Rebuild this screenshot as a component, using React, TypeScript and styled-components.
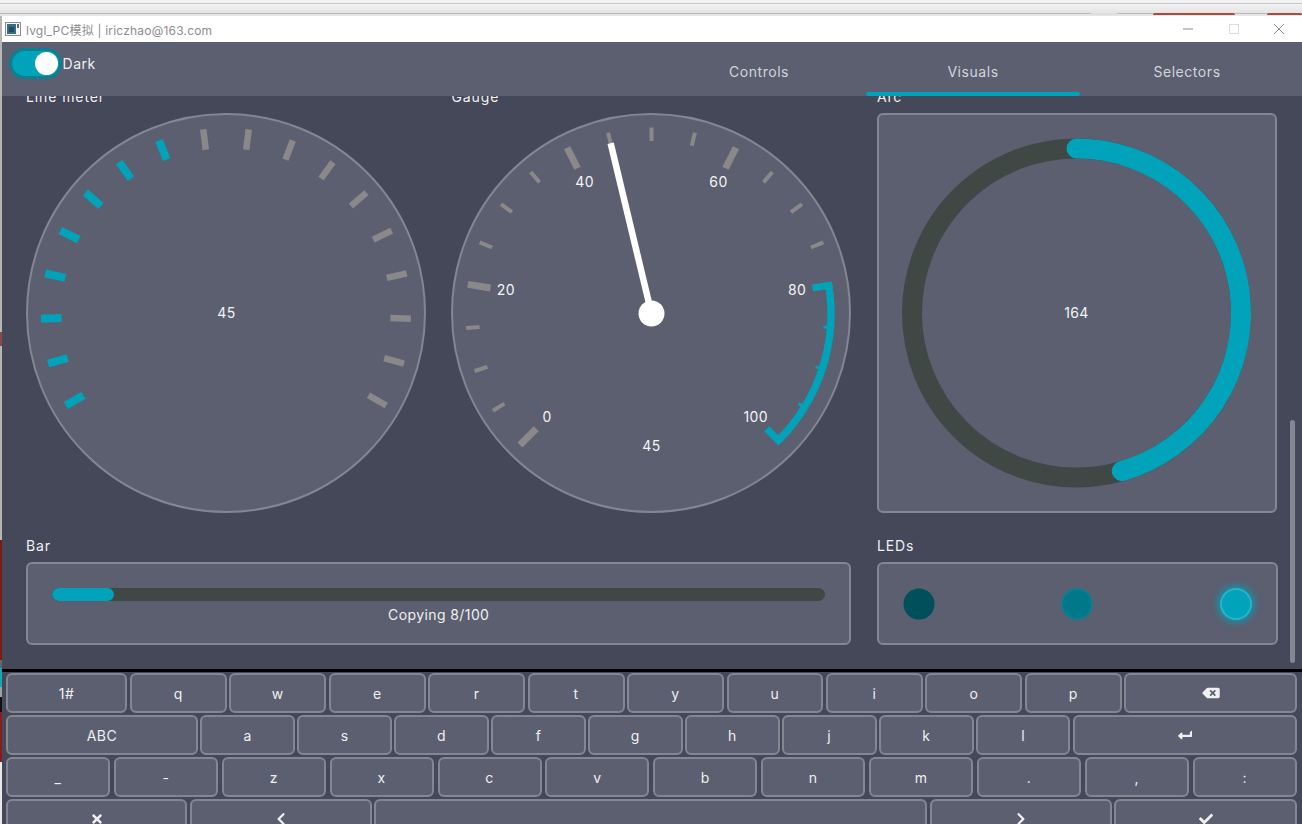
import React from 'react';
import styled, { createGlobalStyle } from 'styled-components';
import { FaBackspace, FaCheck, FaChevronLeft, FaChevronRight, FaLevelDownAlt, FaTimes } from 'react-icons/fa';

const TEAL = '#00a3b9';
const CARD = '#5b5f70';
const PAGE = '#444859';
const EDGE = '#838793';
const TRACK = '#404845';
const TICK = '#8b8889';

const GlobalStyle = createGlobalStyle`
	html, body {
		margin: 0;
		padding: 0;
		background: #ececec;
	}
	body {
		font-family: Inter, "Noto Sans CJK SC", sans-serif;
		letter-spacing: 0.55px;
	}
`;

const polar = (c: number, r: number, deg: number) => {
	const a = (deg * Math.PI) / 180;
	return { x: c + r * Math.cos(a), y: c + r * Math.sin(a) };
};

const arcPath = (c: number, r: number, from: number, to: number) => {
	const a = polar(c, r, from);
	const b = polar(c, r, to);
	const large = to - from > 180 ? 1 : 0;
	return `M ${a.x} ${a.y} A ${r} ${r} 0 ${large} 1 ${b.x} ${b.y}`;
};

function Tick({ c, r0, r1, deg, width, color }: { c: number; r0: number; r1: number; deg: number; width: number; color: string }) {
	const a = polar(c, r0, deg);
	const b = polar(c, r1, deg);
	return <line x1={a.x} y1={a.y} x2={b.x} y2={b.y} stroke={color} strokeWidth={width} />;
}

function LineMeter() {
	const ticks = Array.from({ length: 18 }, (_, i) => i);
	return (
		<DialSvg viewBox='2 2 396 396'>
			{ticks.map((i) => (
				<Tick
					key={i}
					c={200}
					r0={164.5}
					r1={185}
					deg={150 + (i * 240) / 17}
					width={i < 8 ? 8 : 6.5}
					color={i < 8 ? TEAL : TICK}
				/>
			))}
			<DialText x={200.5} y={199.5}>45</DialText>
		</DialSvg>
	);
}

function Gauge() {
	const ticks = Array.from({ length: 21 }, (_, i) => i);
	const labels = [0, 20, 40, 60, 80, 100];
	const needle = polar(200.5, 175, 135 + 45 * 2.7);
	return (
		<DialSvg viewBox='2 2 396 396'>
			{ticks.map((i) => {
				const major = i % 4 === 0;
				const hot = i >= 16;
				const outer = hot ? (major ? 183 : 179) : 186;
				return (
					<Tick
						key={i}
						c={200.5}
						r0={major ? 163 : 172.5}
						r1={outer}
						deg={135 + i * 13.5}
						width={major ? 7 : hot ? 3 : 4}
						color={hot ? TEAL : TICK}
					/>
				);
			})}
			<path d={arcPath(200.5, 179.5, 351, 405)} fill='none' stroke={TEAL} strokeWidth={7.4} />
			{labels.map((value, i) => {
				const p = polar(200.5, 147.5, 135 + i * 54);
				return <DialText key={value} x={p.x} y={p.y - 1}>{value}</DialText>;
			})}
			<line x1={200.5} y1={200.5} x2={needle.x} y2={needle.y} stroke='#fff' strokeWidth={6.5} />
			<circle cx={200.5} cy={200.5} r={13} fill='#fff' />
			<DialText x={200.5} y={332}>45</DialText>
		</DialSvg>
	);
}

function ArcDial() {
	const cx = 199.5;
	const cy = 200;
	const r = 164.5;
	const end = (74 * Math.PI) / 180;
	return (
		<DialSvg viewBox='2 2 396 396'>
			<circle cx={cx} cy={cy} r={r} fill='none' stroke={TRACK} strokeWidth={20} />
			<path
				d={`M ${cx} ${cy - r} A ${r} ${r} 0 0 1 ${cx + r * Math.cos(end)} ${cy + r * Math.sin(end)}`}
				fill='none'
				stroke={TEAL}
				strokeWidth={20}
				strokeLinecap='round'
			/>
			<DialText x={cx} y={cy - 0.5}>164</DialText>
		</DialSvg>
	);
}

function EnterIcon() {
	return <FaLevelDownAlt style={{ transform: 'rotate(90deg)' }} />;
}

function BackspaceIcon() {
	return <FaBackspace style={{ width: 18 }} />;
}

type KeyDef = { label: React.ReactNode; w: number };
const k = (label: React.ReactNode, w: number): KeyDef => ({ label, w });

const keyRows: { gap: number; keys: KeyDef[] }[] = [
	{
		gap: 2.55,
		keys: [
			k('1#', 121.4),
			...['q', 'w', 'e', 'r', 't', 'y', 'u', 'i', 'o', 'p'].map((c) => k(c, 96.9)),
			k(<BackspaceIcon />, 172.6),
		],
	},
	{
		gap: 2.45,
		keys: [
			k('ABC', 192),
			...['a', 's', 'd', 'f', 'g', 'h', 'j', 'k', 'l'].map((c) => k(c, 94.5)),
			k(<EnterIcon />, 224),
		],
	},
	{
		gap: 3.9,
		keys: ['_', '-', 'z', 'x', 'c', 'v', 'b', 'n', 'm', '.', ',', ':'].map((c) => k(c, 104)),
	},
	{
		gap: 2.75,
		keys: [
			k(<FaTimes />, 181.4),
			k(<FaChevronLeft />, 181.6),
			k('', 552.4),
			k(<FaChevronRight />, 182),
			k(<FaCheck />, 182.6),
		],
	},
];

export default function App() {
	return (
		<>
			<GlobalStyle />
			<Screen>
				<BrowserBar>
					<BrowserTab $w={28} $mr={35} />
					<BrowserTab $w={82} $mr={32} $accent />
					<BrowserTab $w={35} $mr={0} $fill />
				</BrowserBar>
				<Desktop>
					<SideStrip />
					<Window>
						<TitleBar>
							<WindowIcon viewBox='0 0 16 14'>
								<rect x='0.5' y='0.5' width='15' height='13' fill='#f4f4f4' stroke='#8d8d8d' />
								<rect x='2' y='2' width='9' height='10' fill='#2f6f8a' />
								<rect x='4' y='5' width='5' height='5' fill='#274a5e' />
								<rect x='12' y='2' width='2' height='4' fill='#5c6c78' />
							</WindowIcon>
							<TitleText>lvgl_PC模拟 | iriczhao@163.com</TitleText>
							<WindowButtons>
								<WindowButton>
									<svg width='10' height='10' viewBox='0 0 10 10'>
										<line x1='0' y1='5' x2='10' y2='5' stroke='#8a8a8a' />
									</svg>
								</WindowButton>
								<WindowButton>
									<svg width='10' height='10' viewBox='0 0 10 10'>
										<rect x='0.5' y='0.5' width='9' height='9' fill='none' stroke='#dcdcdc' />
									</svg>
								</WindowButton>
								<WindowButton>
									<svg width='10' height='10' viewBox='0 0 10 10'>
										<path d='M0 0 L10 10 M10 0 L0 10' stroke='#6f6f6f' strokeWidth='0.8' />
									</svg>
								</WindowButton>
							</WindowButtons>
						</TitleBar>
						<Header>
							<Toggle>
								<Knob />
							</Toggle>
							<ToggleLabel>Dark</ToggleLabel>
							<Tabs>
								<Tab>Controls<TabMark /></Tab>
								<Tab>Visuals<TabMark $active /></Tab>
								<Tab>Selectors<TabMark /></Tab>
							</Tabs>
						</Header>
						<Content>
							<ScrollBody>
								<Section>
									<SectionTitle>Line meter</SectionTitle>
									<Dial><LineMeter /></Dial>
								</Section>
								<Section>
									<SectionTitle>Gauge</SectionTitle>
									<Dial><Gauge /></Dial>
								</Section>
								<Section>
									<SectionTitle>Arc</SectionTitle>
									<ArcCard><ArcDial /></ArcCard>
								</Section>
								<Section $wide>
									<SectionTitle>Bar</SectionTitle>
									<BarCard>
										<BarTrack>
											<BarFill style={{ width: '8%' }} />
										</BarTrack>
										<BarText>Copying 8/100</BarText>
									</BarCard>
								</Section>
								<Section>
									<SectionTitle>LEDs</SectionTitle>
									<LedCard>
										<Led $level='off' />
										<Led $level='mid' />
										<Led $level='on' />
									</LedCard>
								</Section>
							</ScrollBody>
							<ScrollThumb />
						</Content>
						<Keyboard>
							{keyRows.map((row, i) => (
								<KeyRow key={i} $gap={row.gap}>
									{row.keys.map((key, j) => (
										<Key key={j} $w={key.w}>{key.label}</Key>
									))}
								</KeyRow>
							))}
						</Keyboard>
					</Window>
				</Desktop>
			</Screen>
		</>
	);
}

const Screen = styled.div`
	width: 1302px;
	height: 824px;
	display: flex;
	flex-direction: column;
	overflow: hidden;
`;

const BrowserBar = styled.div`
	height: 16px;
	box-sizing: border-box;
	display: flex;
	justify-content: flex-end;
	align-items: flex-end;
	padding-top: 3px;
	border-bottom: 2px solid #e6e6e6;
	background: linear-gradient(#f3f3f3 0, #f3f3f3 3px, #c9c9c9 3px, #c9c9c9 4px, #f2f2f2 4px, #e4e4e4 13px, #b9b9b9 13px, #b9b9b9 14px);
`;

const BrowserTab = styled.div<{ $w: number; $mr: number; $accent?: boolean; $fill?: boolean }>`
	width: ${(p) => p.$w}px;
	height: 2px;
	margin-right: ${(p) => p.$mr}px;
	margin-bottom: -1px;
	border-radius: 6px 6px 0 0;
	background: ${(p) => (p.$fill ? '#a84a3e' : p.$accent ? '#a84a3e' : '#dedede')};
`;

const Desktop = styled.div`
	flex: 1;
	min-height: 0;
	display: flex;
`;

const SideStrip = styled.div`
	width: 2px;
	flex: none;
	background: linear-gradient(
		#b6b6b6 0, #b6b6b6 316px,
		#8a4a44 316px, #8a4a44 330px,
		#b6b6b6 330px, #b6b6b6 524px,
		#7c1a1a 524px, #7c1a1a 644px,
		#5a6a70 644px, #5a6a70 652px,
		#12a8b8 652px, #12a8b8 671px,
		#a0a0a0 671px, #a0a0a0 681px,
		#111 681px, #111 696px,
		#8b1c1c 696px, #8b1c1c 746px,
		#e8e8e8 746px
	);
`;

const Window = styled.div`
	flex: 1;
	min-width: 0;
	display: flex;
	flex-direction: column;
`;

const TitleBar = styled.div`
	height: 26px;
	flex: none;
	display: flex;
	align-items: center;
	background: #fff;
	padding-left: 3px;
`;

const WindowIcon = styled.svg`
	width: 16px;
	height: 14px;
	margin-right: 5px;
`;

const TitleText = styled.span`
	font-size: 12px;
	letter-spacing: 0.2px;
	color: #8d8d8d;
`;

const WindowButtons = styled.div`
	margin-left: auto;
	display: flex;
`;

const WindowButton = styled.div`
	width: 45.5px;
	height: 26px;
	display: flex;
	align-items: center;
	justify-content: center;
`;

const Header = styled.header`
	height: 54px;
	flex: none;
	display: flex;
	align-items: flex-start;
	background: ${CARD};
	padding: 6px 8px 0 6.5px;
	box-sizing: border-box;
`;

const Toggle = styled.div`
	width: 53px;
	height: 31px;
	box-sizing: border-box;
	display: flex;
	align-items: center;
	justify-content: flex-end;
	padding-right: 1px;
	border: 3px solid #0d7f8f;
	border-radius: 16px;
	background: ${TEAL};
`;

const Knob = styled.span`
	width: 23px;
	height: 23px;
	border-radius: 50%;
	background: #fff;
`;

const ToggleLabel = styled.span`
	margin-left: 1px;
	line-height: 31px;
	font-size: 14px;
	color: #f0f0f0;
`;

const Tabs = styled.nav`
	margin-left: auto;
	display: flex;
	margin-top: -6px;
`;

const Tab = styled.div`
	width: 214px;
	height: 54px;
	display: flex;
	flex-direction: column;
	align-items: center;
	justify-content: flex-end;
	font-size: 14px;
	line-height: 20px;
	color: #d3d5da;
`;

const TabMark = styled.span<{ $active?: boolean }>`
	width: 100%;
	height: 4px;
	margin-top: 10px;
	border-radius: 2px;
	background: ${(p) => (p.$active ? TEAL : 'transparent')};
`;

const Content = styled.main`
	position: relative;
	height: 573px;
	flex: none;
	overflow: hidden;
	background: ${PAGE};
`;

const ScrollBody = styled.div`
	display: grid;
	grid-template-columns: 400px 400.1px 401px;
	column-gap: 25.4px;
	row-gap: 24px;
	margin-top: -8px;
	padding-left: 24px;
`;

const Section = styled.section<{ $wide?: boolean }>`
	grid-column: ${(p) => (p.$wide ? 'span 2' : 'auto')};
	display: flex;
	flex-direction: column;
	gap: 8px;
`;

const SectionTitle = styled.h3`
	margin: 0;
	font-size: 14px;
	font-weight: 400;
	letter-spacing: 0.9px;
	line-height: 17px;
	color: #f0f0f0;
`;

const Dial = styled.div`
	width: 400px;
	height: 400px;
	box-sizing: border-box;
	border: 2px solid ${EDGE};
	border-radius: 50%;
	background: ${CARD};
`;

const ArcCard = styled.div`
	width: 400px;
	height: 400px;
	box-sizing: border-box;
	border: 2px solid ${EDGE};
	border-radius: 6px;
	background: ${CARD};
`;

const DialSvg = styled.svg`
	display: block;
	width: 396px;
	height: 396px;
`;

const DialText = styled.text`
	font-size: 14px;
	letter-spacing: 0.4px;
	fill: #f4f4f4;
	text-anchor: middle;
	dominant-baseline: central;
`;

const BarCard = styled.div`
	height: 83px;
	box-sizing: border-box;
	padding: 24px 24px 0;
	border: 2px solid ${EDGE};
	border-radius: 6px;
	background: ${CARD};
`;

const BarTrack = styled.div`
	height: 13px;
	border-radius: 7px;
	background: ${TRACK};
	overflow: hidden;
`;

const BarFill = styled.div`
	height: 100%;
	border-radius: 7px;
	background: ${TEAL};
`;

const BarText = styled.div`
	margin-top: 5px;
	text-align: center;
	font-size: 14px;
	letter-spacing: 0.4px;
	line-height: 17px;
	color: #f0f0f0;
`;

const LedCard = styled.div`
	height: 83px;
	box-sizing: border-box;
	display: flex;
	align-items: center;
	justify-content: space-between;
	padding: 0 24px;
	border: 2px solid ${EDGE};
	border-radius: 6px;
	background: ${CARD};
`;

const ledStyles = {
	off: 'background: #00505b; transform: scale(0.97);',
	mid: 'background: #01788a; border: 2px solid #0a8090;',
	on: `background: ${TEAL}; border: 2px solid #25b5c8; box-shadow: 0 0 6px 3px rgba(0, 163, 185, 0.7);`,
};

const Led = styled.span<{ $level: 'off' | 'mid' | 'on' }>`
	width: 32px;
	height: 32px;
	box-sizing: border-box;
	border-radius: 50%;
	${(p) => ledStyles[p.$level]}
`;

const ScrollThumb = styled.div`
	position: absolute;
	right: 7px;
	top: 324px;
	width: 5px;
	height: 243px;
	border-radius: 3px;
	background: ${EDGE};
`;

const Keyboard = styled.div`
	flex: 1;
	min-height: 0;
	overflow: hidden;
	box-sizing: border-box;
	display: flex;
	flex-direction: column;
	gap: 2px;
	padding: 1px 5px 0 4px;
	border-top: 3px solid #000;
	background: ${PAGE};
`;

const KeyRow = styled.div<{ $gap: number }>`
	height: 40px;
	flex: none;
	display: flex;
	gap: ${(p) => p.$gap}px;
`;

const Key = styled.div<{ $w: number }>`
	flex: none;
	width: ${(p) => p.$w}px;
	box-sizing: border-box;
	display: flex;
	align-items: center;
	justify-content: center;
	border: 2px solid ${EDGE};
	border-radius: 6px;
	background: ${CARD};
	font-size: 14px;
	color: #f0f0f0;
	svg {
		width: auto;
		height: 14px;
	}
`;
